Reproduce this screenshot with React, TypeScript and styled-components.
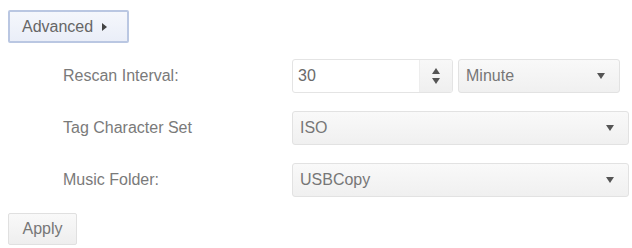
import React from "react";
import styled, { createGlobalStyle } from "styled-components";

const Global = createGlobalStyle`
  html, body { margin: 0; padding: 0; background: #fff; }
  body { font-family: "Liberation Sans", Arial, sans-serif; font-size: 16px; color: #777; }
`;

const Page = styled.div`
  padding: 10px 0 0 8px;
  width: 632px;
  height: 248px;
  box-sizing: border-box;
`;

const AdvancedButton = styled.div`
  box-sizing: border-box;
  width: 121px;
  height: 33px;
  display: flex;
  align-items: center;
  gap: 9px;
  padding-left: 12px;
  border: 2px solid #bac7e2;
  border-radius: 2px;
  background: linear-gradient(#f5f7fc, #eaeef8);
  color: #666;
`;

const RightTri = styled.span`
  width: 0;
  height: 0;
  border-top: 4px solid transparent;
  border-bottom: 4px solid transparent;
  border-left: 5px solid #444;
  margin-top: 1px;
`;

const Form = styled.div`
  margin-top: 16px;
  display: grid;
  grid-template-columns: 229px 337px;
  grid-auto-rows: 34px;
  row-gap: 18px;
  padding-left: 55px;
`;

const Label = styled.div`
  display: flex;
  align-items: center;
  color: #7a7a7a;
`;

const Controls = styled.div`
  display: flex;
  gap: 5px;
`;

const NumberBox = styled.div`
  box-sizing: border-box;
  width: 161px;
  height: 34px;
  display: flex;
  border: 1px solid #e4e4e4;
  border-radius: 3px;
  background: #fff;
  overflow: hidden;
`;

const NumberValue = styled.div`
  flex: 1;
  display: flex;
  align-items: center;
  padding-left: 5px;
  color: #6a6a6a;
`;

const Spinner = styled.div`
  width: 32px;
  display: flex;
  flex-direction: column;
  align-items: center;
  justify-content: center;
  gap: 4px;
  background: linear-gradient(#f8f8f8, #efefef);
  border-left: 1px solid #ededed;
`;

const UpTri = styled.span`
  width: 0;
  height: 0;
  border-left: 4px solid transparent;
  border-right: 4px solid transparent;
  border-bottom: 6px solid #555;
`;

const DownTri = styled.span`
  width: 0;
  height: 0;
  border-left: 4px solid transparent;
  border-right: 4px solid transparent;
  border-top: 6px solid #555;
`;

const Select = styled.div<{ $w: number }>`
  box-sizing: border-box;
  width: ${(p) => p.$w}px;
  height: 34px;
  display: flex;
  align-items: center;
  justify-content: space-between;
  padding: 0 14px 0 7px;
  border: 1px solid #e2e2e2;
  border-radius: 3px;
  background: linear-gradient(#f9f9f9, #f0f0f0);
  color: #777;
`;

const Apply = styled.div`
  box-sizing: border-box;
  margin-top: 16px;
  width: 69px;
  height: 32px;
  display: flex;
  align-items: center;
  justify-content: center;
  border: 1px solid #e0e0e0;
  border-radius: 2px;
  background: linear-gradient(#f9f9f9, #eeeeee);
  color: #777;
`;

export default function App() {
  return (
    <Page>
      <Global />
      <AdvancedButton>
        Advanced
        <RightTri />
      </AdvancedButton>
      <Form>
        <Label>Rescan Interval:</Label>
        <Controls>
          <NumberBox>
            <NumberValue>30</NumberValue>
            <Spinner>
              <UpTri />
              <DownTri />
            </Spinner>
          </NumberBox>
          <Select $w={162}>
            Minute
            <DownTri />
          </Select>
        </Controls>
        <Label>Tag Character Set</Label>
        <Select $w={337}>
          ISO
          <DownTri />
        </Select>
        <Label>Music Folder:</Label>
        <Select $w={337}>
          USBCopy
          <DownTri />
        </Select>
      </Form>
      <Apply>Apply</Apply>
    </Page>
  );
}
